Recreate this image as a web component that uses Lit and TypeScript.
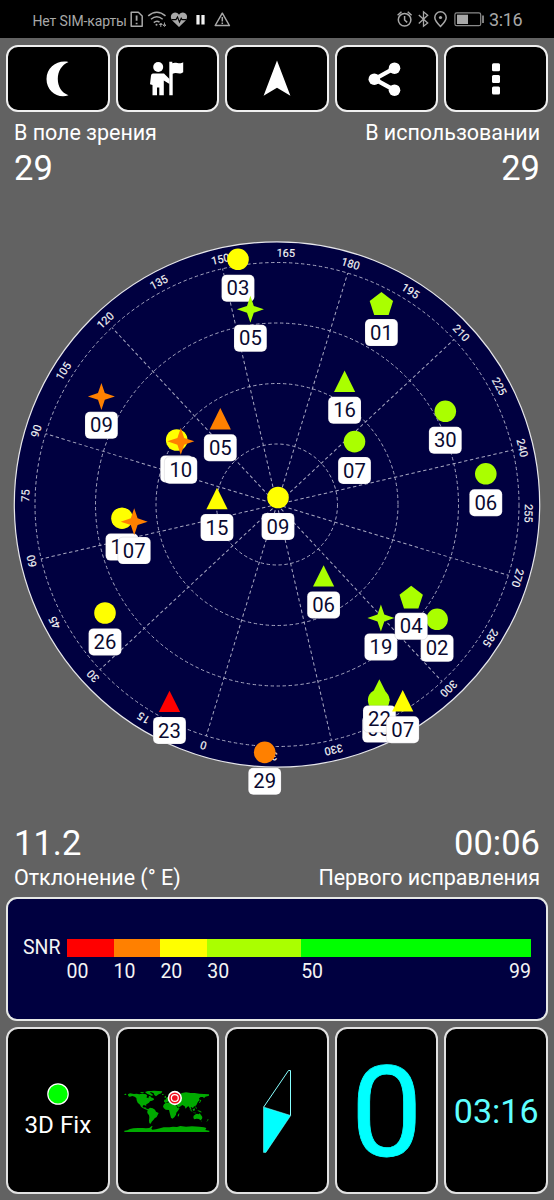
import { LitElement, html, svg, css } from "lit";
import { customElement } from "lit/decorators.js";

type Shape = "circle" | "triangle" | "star" | "pentagon";
interface Satellite {
  id: string;
  shape: Shape;
  color: string;
  x: number;
  y: number;
}

const RED = "#ff0000";
const ORANGE = "#ff8000";
const YELLOW = "#ffff00";
const LIME = "#aaff00";
const GREEN = "#00ff00";

const CENTER_X = 277;
const CENTER_Y = 504.5;
const HEADING = 197;

const satellites: Satellite[] = [
  { id: "03", shape: "circle", color: YELLOW, x: 238, y: 259.3 },
  { id: "05", shape: "star", color: LIME, x: 250.4, y: 309.3 },
  { id: "01", shape: "pentagon", color: LIME, x: 381.4, y: 303.7 },
  { id: "16", shape: "triangle", color: LIME, x: 344.6, y: 381.3 },
  { id: "30", shape: "circle", color: LIME, x: 445.3, y: 411.3 },
  { id: "09", shape: "star", color: ORANGE, x: 101.4, y: 396.4 },
  { id: "12", shape: "circle", color: YELLOW, x: 176.7, y: 440 },
  { id: "10", shape: "star", color: ORANGE, x: 180.8, y: 441.3 },
  { id: "05", shape: "triangle", color: ORANGE, x: 220.3, y: 418.8 },
  { id: "07", shape: "circle", color: LIME, x: 354.5, y: 441.6 },
  { id: "06", shape: "circle", color: LIME, x: 485.8, y: 473.8 },
  { id: "15", shape: "triangle", color: YELLOW, x: 217, y: 498.6 },
  { id: "09", shape: "circle", color: YELLOW, x: 278, y: 497.5 },
  { id: "12", shape: "circle", color: YELLOW, x: 122, y: 518.2 },
  { id: "07", shape: "star", color: ORANGE, x: 134.2, y: 521.7 },
  { id: "26", shape: "circle", color: YELLOW, x: 105, y: 613 },
  { id: "06", shape: "triangle", color: LIME, x: 323.6, y: 576 },
  { id: "19", shape: "star", color: LIME, x: 380.9, y: 618 },
  { id: "02", shape: "circle", color: LIME, x: 437.1, y: 619.3 },
  { id: "04", shape: "pentagon", color: LIME, x: 411.2, y: 597.4 },
  { id: "23", shape: "triangle", color: RED, x: 169.5, y: 701.5 },
  { id: "29", shape: "circle", color: ORANGE, x: 264.7, y: 752.4 },
  { id: "06", shape: "circle", color: LIME, x: 378.7, y: 700.2 },
  { id: "22", shape: "triangle", color: LIME, x: 379.4, y: 690 },
  { id: "07", shape: "triangle", color: YELLOW, x: 402.7, y: 700.8 },
];

const shapePath: Record<Shape, string> = {
  circle: "M-10.8 0a10.8 10.8 0 1 0 21.6 0a10.8 10.8 0 1 0 -21.6 0Z",
  triangle: "M0 -10.8L10.6 10.6H-10.6Z",
  star: "M0 -13.5L3.4 -3.4L13.5 0L3.4 3.4L0 13.5L-3.4 3.4L-13.5 0L-3.4 -3.4Z",
  pentagon: "M0 -11.6L11.7 -2.6L7.2 11.2H-7.2L-11.7 -2.6Z",
};

@customElement("sky-plot")
class SkyPlot extends LitElement {
  static styles = css`
    :host { display: block; }
    svg { display: block; }
    .tick { font: 400 11px Roboto, sans-serif; fill: #f6f6f6; stroke: #f6f6f6; stroke-width: 0.15; text-anchor: middle; }
    .id { font: 400 20.3px Roboto, sans-serif; fill: #0a0a30; text-anchor: middle; }
    .disc { fill: #000040; stroke: #e6e6ea; stroke-width: 1.2; }
    .grid { fill: none; stroke: #a6a6c0; stroke-width: 1; stroke-dasharray: 3.4 2.6; }
    .pill { fill: #fff; stroke: #3c3448; stroke-opacity: 0.2; stroke-width: 0.6; }
  `;

  render() {
    const ticks = Array.from({ length: 24 }, (_, i) => i * 15);
    return html`<svg width="554" height="630" viewBox="0 190 554 630">
      <circle class="disc" cx=${CENTER_X} cy=${CENTER_Y} r="262.7" />
      ${[60.5, 121, 181.5, 242].map(
        (r) => svg`<circle class="grid" cx=${CENTER_X} cy=${CENTER_Y} r=${r} />`
      )}
      ${ticks.map((deg) => {
        const turn = `rotate(${deg + HEADING} ${CENTER_X} ${CENTER_Y})`;
        return svg`<g transform=${turn}>
          ${deg % 30 === 0
            ? svg`<path class="grid" d="M${CENTER_X} ${CENTER_Y}V262.5" />`
            : null}
          <text class="tick" x=${CENTER_X} y="256.6">${deg}</text>
        </g>`;
      })}
      ${satellites.map(
        (s) => svg`<g transform="translate(${s.x} ${s.y})">
          <path d=${shapePath[s.shape]} fill=${s.color} />
          <rect class="pill" x="-16.4" y="15.4" width="32.8" height="27" rx="5" />
          <text class="id" x="0" y="36">${s.id}</text>
        </g>`
      )}
    </svg>`;
  }
}

@customElement("snr-legend")
class SnrLegend extends LitElement {
  static styles = css`
    :host {
      display: grid;
      grid-template-columns: 58.6px 464.4px;
      align-content: start;
      box-sizing: border-box;
      height: 124px;
      padding: 40px 0 0;
      border: 2px solid #e6e8e6;
      border-radius: 11px;
      background: #000040;
      color: #f4f4f4;
      font-size: 19.5px;
      line-height: 18px;
    }
    .name { padding-left: 15px; line-height: 18px; }
    .bar { display: flex; height: 18px; }
    .marks { grid-column: 2; display: flex; padding-top: 6px; }
    .mark { display: flex; justify-content: space-between; }
  `;

  render() {
    const bands = [
      { from: "00", span: 10, color: RED },
      { from: "10", span: 10, color: ORANGE },
      { from: "20", span: 10, color: YELLOW },
      { from: "30", span: 20, color: LIME },
      { from: "50", to: "99", span: 49, color: GREEN },
    ];
    return html`
      <div class="name">SNR</div>
      <div class="bar">
        ${bands.map((b) => html`<div style="flex:${b.span} 0 0;background:${b.color}"></div>`)}
      </div>
      <div class="marks">
        ${bands.map(
          (b) => html`<div class="mark" style="flex:${b.span} 0 0">
            <span>${b.from}</span>${b.to ? html`<span>${b.to}</span>` : null}
          </div>`
        )}
      </div>
    `;
  }
}

const moonIcon = html`<svg width="104" height="68" viewBox="0 0 104 68">
  <path fill="#fff" d="M62.5 17C52 14.5 40.5 22 40.5 34C40.5 46.500 52 54 62.500 50.300C55.500 47.500 51.800 41.500 51.800 34C51.800 26.300 55.500 20 62.500 17Z" /></svg>`;
const guideIcon = html`<svg width="104" height="68" viewBox="0 0 104 68">
  <g fill="#fff">
    <circle cx="43.200" cy="22" r="5" />
    <path d="M38 28.500H49L54.500 34V39L48.800 35.500V50.300H44.300V42.500H42V50.300H37.500V40L35 39.200L36 30.500Q36.300 28.500 38 28.500Z" />
    <path d="M54.300 16.800H57.300V18.200C61.300 16.300 64 20 68.200 17.200V27.200C64.500 30 61.300 26.700 57.700 28.800V50.300H54.300Z" />
  </g></svg>`;
const arrowIcon = html`<svg width="104" height="68" viewBox="0 0 104 68">
  <path fill="#fff" d="M52 15.500L65.400 50.700L52 42.800L38.600 50.700Z" /></svg>`;
const shareIcon = html`<svg width="104" height="68" viewBox="0 0 104 68">
  <path d="M59.500 23.200L39.500 34.200L59.500 45.200" fill="none" stroke="#fff" stroke-width="4.200" />
  <g fill="#fff"><circle cx="59.500" cy="23.200" r="5.800" /><circle cx="39.300" cy="34.200" r="5.800" /><circle cx="59.500" cy="45.200" r="5.800" /></g></svg>`;
const moreIcon = html`<svg width="104" height="68" viewBox="0 0 104 68">
  <g fill="#fff"><rect x="48" y="18.300" width="8" height="8" rx="1.500" /><rect x="48" y="30" width="8" height="8" rx="1.500" /><rect x="48" y="41.500" width="8" height="8" rx="1.500" /></g></svg>`;

const worldMap = html`<svg class="map" width="86" height="42" viewBox="375 209 256 126">
  <g fill="#00aa00">
    <path d="M375 221L380 220L381 224L376 224ZM386 222L392 219L404 221L412 220L420 222L428 220L440 222L444 226L441 231L447 234L449 227L453 228L457 232L462 233L464 238L458 241L452 243L449 247L444 250L440 253L441 258L437 255L431 255L430 259L434 262L438 260L439 264L445 266L449 269L446 270L438 267L430 263L425 259L422 253L415 247L412 240L411 233L406 229L399 227L392 229L386 231L391 227L386 226Z" />
    <path d="M421 217L428 215L435 217L431 219ZM437 215L446 212L456 213L452 217L458 221L462 225L456 226L450 223L443 220ZM446 213L464 211L489 213L486 219L478 222L470 228L465 224L463 219L456 216Z" />
    <path d="M447 266L452 262L460 264L467 268L470 274L478 278L475 284L472 290L466 294L462 299L457 304L454 310L450 309L449 302L450 291L449 285L444 278L444 272Z" />
    <path d="M494 252L499 248L510 246L517 249L525 250L530 254L535 263L541 264L536 271L531 277L530 283L525 291L519 295L515 292L513 285L511 277L509 269L499 268L493 263L491 258ZM537 281L540 279L539 286L536 289L535 286Z" />
    <path d="M494 244L495 238L501 237L500 233L505 230L510 228L507 222L514 217L522 217L531 221L542 222L548 218L560 216L574 218L586 218L600 220L614 221L629 222L629 226L618 229L614 234L611 230L604 230L599 234L601 240L596 244L593 250L591 255L586 258L583 259L581 264L577 261L574 260L577 269L572 265L568 258L564 259L559 265L556 258L549 254L544 258L537 262L531 253L527 248L519 247L515 244L509 241L505 244L499 248ZM496 228L500 226L500 232L496 233ZM488 222L493 221L492 224L488 224ZM603 238L606 240L602 247L598 249L601 244Z" />
    <path d="M570 265L576 269L580 275L575 272ZM580 267L586 264L587 270L582 272ZM581 277L590 277L590 279L581 278ZM594 270L602 271L608 276L603 276L597 273ZM588 257L591 261L593 266L589 264ZM583 286L589 282L593 280L598 282L601 279L605 284L609 290L608 296L603 300L599 296L592 295L584 297L582 291ZM604 301L607 301L606 304ZM625 296L628 298L624 303L620 304L624 301Z" />
    <path d="M375 331L384 330L392 326L402 324L416 323L430 323L440 324L450 323L457 317L460 318L456 325L459 328L470 327L482 324L493 321L510 321L521 319L533 320L543 317L560 319L578 318L600 319L614 321L621 323L618 329L630 331V335H375Z" />
  </g>
  <circle cx="526.500" cy="233" r="21.500" fill="#fff" />
  <circle cx="526.500" cy="233" r="14.500" fill="none" stroke="#f01020" stroke-width="4.500" />
  <circle cx="526.500" cy="233" r="8.500" fill="#f01020" />
</svg>`;

const compass = html`<svg width="34" height="88" viewBox="260 1066 34 88">
  <path d="M263.700 1106L288.500 1069.500H290.500V1114.500" fill="none" stroke="#8ff" stroke-width="1" />
  <path d="M263.500 1106L290.700 1114.500L265.900 1151.400H263.500Z" fill="#00ffff" stroke="#8ff" stroke-width=".5" />
</svg>`;

const statusLeft = html`<svg width="104" height="20" viewBox="128 9 104 20" fill="none" stroke="#a8a8a8" stroke-width="1.500">
  <path d="M131.200 12.200H138.300L142.200 16V26.200H131.200Z" stroke-linejoin="round" />
  <path d="M136.600 15.500V20.800M136.600 22.700V24.300" stroke-width="1.800" />
  <path d="M148.200 15.900Q156.800 8.500 165.500 15.900M151 19.300Q156.800 14.300 162.700 19.300M153.800 22.600Q156.800 20 159.500 22.200" />
  <circle cx="156.500" cy="24.800" r="1" fill="#a8a8a8" stroke="none" />
  <path d="M159.300 24.500L160.800 23L162.300 24.500ZM160.800 27V24M163 25L164.500 26.500L166 25ZM164.500 22.500V25.500" stroke-width=".9" />
  <path d="M179 27L172.500 20.800C167.500 14.500 175.500 9.500 179 14.700C182.500 9.500 190.500 14.500 185.500 20.800Z" fill="#a8a8a8" stroke="none" />
  <path d="M171.500 19.600H176L177.500 17L179.500 22L181.200 18.200L182 19.600H186.500" stroke="#000" stroke-width="1.100" />
  <path d="M198 15V24.500M203 15V24.500" stroke="#f2f2f2" stroke-width="3.200" />
  <path d="M222.300 13.200L229.400 25.500H215.200Z" stroke-linejoin="round" />
  <path d="M222.300 17V21.400M222.300 22.500V24" />
</svg>`;

const statusRight = html`<svg width="90" height="20" viewBox="396 9 90 20" fill="none" stroke="#a8a8a8" stroke-width="1.500">
  <circle cx="404.600" cy="19.800" r="6.300" />
  <path d="M404.600 16V20L407.200 22.400M397.600 15.200L401.500 11.800M411.600 15.200L407.700 11.800" />
  <path d="M418.800 15L427.700 23L423.500 26.200V11.800L427.700 15.300L418.800 23.500" stroke-width="1.300" />
  <path d="M440.500 26.500C436.500 22.500 434.800 20 434.800 17.500A5.700 5.700 0 0 1 446.200 17.500C446.200 20 444.500 22.500 440.500 26.500Z" />
  <circle cx="440.500" cy="17.500" r="1.600" fill="#a8a8a8" stroke="none" />
  <rect x="454.900" y="12.900" width="25.800" height="12.800" rx="1.800" stroke="#8a8a8a" stroke-width="1.200" />
  <rect x="457" y="14.700" width="11" height="9.300" fill="#a8a8a8" stroke="none" />
  <path d="M483 15.500V23" stroke-width="1.500" />
</svg>`;

@customElement("app-root")
class AppRoot extends LitElement {
  static styles = css`
    :host {
      display: flex;
      flex-direction: column;
      box-sizing: border-box;
      width: 554px;
      height: 1200px;
      overflow: hidden;
      background: #626262;
      color: #fff;
      font-family: Roboto, sans-serif;
    }
    svg { display: block; flex: none; }
    .status {
      display: flex;
      align-items: center;
      box-sizing: border-box;
      height: 38px;
      padding: 0 31px 0 32.5px;
      background: #000;
      color: #a8a8a8;
      flex: none;
    }
    .carrier { width: 95.5px; padding-top: 3px; font-size: 14px; white-space: nowrap; letter-spacing: -0.12px; line-height: 20px; }
    .clock { width: 34px; margin-left: 3px; padding-top: 2px; font-size: 18px; line-height: 20px; white-space: nowrap; letter-spacing: -0.35px; }
    .spacer { flex: 1; }
    .tiles {
      display: grid;
      grid-template-columns: repeat(5, minmax(0, 1fr));
      gap: 6px;
      padding: 0 6px;
      flex: none;
    }
    .toolbar { height: 67px; margin-top: 7px; }
    .cards { height: 167px; margin-top: 6px; }
    .tile {
      display: flex;
      flex-direction: column;
      align-items: center;
      justify-content: center;
      box-sizing: border-box;
      border: 2px solid #f0f0f0;
      border-radius: 12px;
      background: #000;
      overflow: hidden;
    }
    .cards .tile { border-color: #e2e2e2; }
    .info { display: flex; justify-content: space-between; padding: 0 14px; flex: none; }
    .label { font-size: 21.5px; line-height: 24px; letter-spacing: -0.04px; white-space: nowrap; }
    .value { font-size: 34.5px; line-height: 40px; }
    .top { padding-top: 9px; height: 69px; }
    .top .value { padding-top: 3px; }
    .bottom { height: 74px; padding-top: 3px; }
    .bottom .label { padding-top: 3px; }
    .end { text-align: right; }
    .legend { margin: 0 6px; flex: none; }
    .fix { font-size: 24.2px; line-height: 28px; margin-top: 6px; }
    .speed { font-size: 127px; line-height: 130px; padding-top: 4px; color: #00ffff; -webkit-text-stroke: 0.8px #00ffff; }
    .time { font-size: 34px; line-height: 40px; color: #5fffff; }
  `;

  render() {
    return html`
      <div class="status">
        <span class="carrier">Нет SIM-карты</span>${statusLeft}
        <span class="spacer"></span>
        ${statusRight}<span class="clock">3:16</span>
      </div>
      <div class="tiles toolbar">
        ${[moonIcon, guideIcon, arrowIcon, shareIcon, moreIcon].map(
          (icon) => html`<div class="tile">${icon}</div>`
        )}
      </div>
      <div class="info top">
        <div><div class="label">В поле зрения</div><div class="value">29</div></div>
        <div class="end"><div class="label">В использовании</div><div class="value">29</div></div>
      </div>
      <sky-plot></sky-plot>
      <div class="info bottom">
        <div><div class="value">11.2</div><div class="label">Отклонение (° E)</div></div>
        <div class="end"><div class="value">00:06</div><div class="label">Первого исправления</div></div>
      </div>
      <snr-legend class="legend"></snr-legend>
      <div class="tiles cards">
        <div class="tile">
          <svg width="22" height="22" viewBox="0 0 22 22">
            <circle cx="11" cy="11" r="10.200" fill="#00ff00" stroke="#fff" stroke-width="1.200" />
          </svg>
          <div class="fix">3D Fix</div>
        </div>
        <div class="tile">${worldMap}</div>
        <div class="tile">${compass}</div>
        <div class="tile"><div class="speed">0</div></div>
        <div class="tile"><div class="time">03:16</div></div>
      </div>
    `;
  }
}
